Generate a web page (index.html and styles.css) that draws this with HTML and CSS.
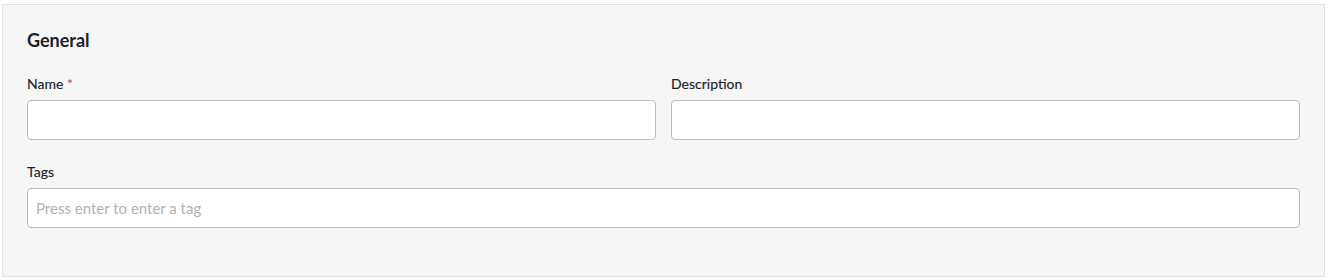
FILE: index.html
```html
<!DOCTYPE html>
<html lang="en">
<head>
<meta charset="utf-8">
<title>General</title>
<link rel="stylesheet" href="styles.css">
</head>
<body>
  <section class="panel">
    <h2 class="panel-title">General</h2>
    <div class="row">
      <div class="field">
        <label class="label" for="name">Name <span class="req">*</span></label>
        <input class="input" id="name" type="text">
      </div>
      <div class="field">
        <label class="label" for="desc">Description</label>
        <input class="input" id="desc" type="text">
      </div>
    </div>
    <div class="field">
      <label class="label" for="tags">Tags</label>
      <input class="input" id="tags" type="text" placeholder="Press enter to enter a tag">
    </div>
  </section>
</body>
</html>
```
FILE: styles.css
```css
html, body {
  margin: 0;
  padding: 0;
  background: #ffffff;
}
body {
  padding: 4px 3px 0 2px;
  font-family: Lato, "Liberation Sans", sans-serif;
  color: #1d2129;
}
.panel {
  box-sizing: border-box;
  background: #f6f6f6;
  border: 1px solid #e2e2e2;
  padding: 24px 24px 24px 24px;
}
.panel-title {
  margin: 0 0 24px 0;
  font-size: 18px;
  font-weight: 700;
  line-height: normal;
}
.row {
  display: grid;
  grid-template-columns: 1fr 1fr;
  column-gap: 15px;
}
.field {
  display: flex;
  flex-direction: column;
  margin-bottom: 24px;
}
.row .field {
  margin-bottom: 23px;
}
.label {
  font-size: 14px;
  line-height: normal;
  margin-bottom: 8px;
  color: #1a1e26;
  -webkit-text-stroke: 0.15px #1a1e26;
}
.req {
  color: #d93a3a;
  -webkit-text-stroke: 0;
}
.input {
  box-sizing: border-box;
  height: 40px;
  width: 100%;
  margin: 0;
  padding: 0 8px;
  border: 1px solid #bababa;
  border-radius: 4px;
  background: #ffffff;
  font-family: Lato, "Liberation Sans", sans-serif;
  font-size: 15px;
  color: #1d2129;
  outline: none;
}
.input::placeholder {
  color: #b2b2b2;
  opacity: 1;
}
```
